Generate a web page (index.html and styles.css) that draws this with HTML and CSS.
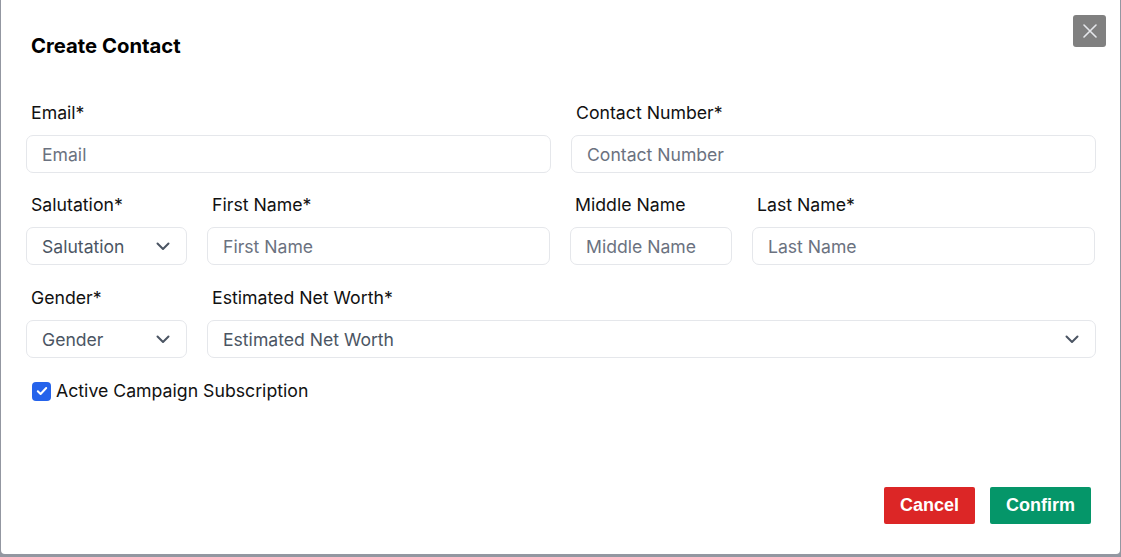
FILE: index.html
```html
<!DOCTYPE html>
<html lang="en">
<head>
<meta charset="utf-8">
<title>Create Contact</title>
<link rel="stylesheet" href="styles.css">
</head>
<body>
<div class="modal">
  <header class="modal-header">
    <h2 class="modal-title">Create Contact</h2>
    <button class="close-btn" type="button" aria-label="Close">
      <svg width="14" height="14" viewBox="0 0 14 14"><path d="M1 1L13 13M13 1L1 13" stroke="#e5e7eb" stroke-width="1.6" stroke-linecap="round"/></svg>
    </button>
  </header>
  <form class="modal-body">
    <div class="row row-2">
      <div class="field">
        <label class="label">Email*</label>
        <input class="input" placeholder="Email">
      </div>
      <div class="field">
        <label class="label">Contact Number*</label>
        <input class="input" placeholder="Contact Number">
      </div>
    </div>
    <div class="row row-4">
      <div class="field">
        <label class="label">Salutation*</label>
        <div class="select">
          <span class="select-text">Salutation</span>
          <svg class="chev" width="14" height="9" viewBox="0 0 14 9"><path d="M1.5 1.5L7 7L12.5 1.5" fill="none" stroke="#4b5563" stroke-width="2" stroke-linecap="round" stroke-linejoin="round"/></svg>
        </div>
      </div>
      <div class="field">
        <label class="label">First Name*</label>
        <input class="input" placeholder="First Name">
      </div>
      <div class="field">
        <label class="label">Middle Name</label>
        <input class="input" placeholder="Middle Name">
      </div>
      <div class="field">
        <label class="label">Last Name*</label>
        <input class="input" placeholder="Last Name">
      </div>
    </div>
    <div class="row row-gender">
      <div class="field">
        <label class="label">Gender*</label>
        <div class="select">
          <span class="select-text">Gender</span>
          <svg class="chev" width="14" height="9" viewBox="0 0 14 9"><path d="M1.5 1.5L7 7L12.5 1.5" fill="none" stroke="#4b5563" stroke-width="2" stroke-linecap="round" stroke-linejoin="round"/></svg>
        </div>
      </div>
      <div class="field">
        <label class="label">Estimated Net Worth*</label>
        <div class="select">
          <span class="select-text">Estimated Net Worth</span>
          <svg class="chev" width="14" height="9" viewBox="0 0 14 9"><path d="M1.5 1.5L7 7L12.5 1.5" fill="none" stroke="#4b5563" stroke-width="2" stroke-linecap="round" stroke-linejoin="round"/></svg>
        </div>
      </div>
    </div>
    <label class="check-row">
      <span class="checkbox">
        <svg width="12" height="10" viewBox="0 0 12 10"><path d="M1.8 5.2L4.6 8L10.2 2" fill="none" stroke="#fff" stroke-width="2" stroke-linecap="round" stroke-linejoin="round"/></svg>
      </span>
      <span class="check-label">Active Campaign Subscription</span>
    </label>
  </form>
  <footer class="modal-footer">
    <button class="btn btn-cancel" type="button">Cancel</button>
    <button class="btn btn-confirm" type="button">Confirm</button>
  </footer>
</div>
</body>
</html>
```

FILE: styles.css
```css
* { box-sizing: border-box; }
html, body { margin: 0; padding: 0; }
body {
  background: #9397a1;
  width: 1121px;
  height: 557px;
  overflow: hidden;
  font-family: Inter, "Liberation Sans", sans-serif;
}
.modal {
  position: relative;
  margin-left: 1px;
  width: 1119px;
  height: 554px;
  background: #fff;
  border-radius: 0 0 4px 4px;
  display: flex;
  flex-direction: column;
}
.modal-header {
  padding: 33px 30px 0 30px;
}
.modal-title {
  margin: 0;
  font-size: 20.3px;
  line-height: 25px;
  font-weight: 700;
  color: #000;
}
.close-btn {
  position: absolute;
  top: 15px;
  right: 14px;
  width: 33px;
  height: 32px;
  border: none;
  border-radius: 3px;
  background: #808080;
  display: flex;
  align-items: center;
  justify-content: center;
  padding: 0;
}
.modal-body {
  margin: 0;
  padding: 43px 24px 0 25px;
  display: flex;
  flex-direction: column;
  gap: 20px;
}
.row { display: grid; column-gap: 20px; }
.row-2 { grid-template-columns: 1fr 1fr; }
.row-4 { grid-template-columns: 161px 343px 162px 343px; }
.row-gender { grid-template-columns: 161px 1fr; padding-top: 1px; }
.field { display: flex; flex-direction: column; }
.label {
  font-size: 17.7px;
  line-height: 24px;
  color: #111;
  padding-left: 5px;
  margin-bottom: 10px;
}
.input, .select {
  height: 38px;
  border: 1px solid #e5e7eb;
  border-radius: 7px;
  background: #fff;
  font-family: inherit;
  font-size: 17.6px;
  padding: 0 15px;
  color: #374151;
  outline: none;
  width: 100%;
}
.input::placeholder { color: #6b7280; }
.select {
  display: flex;
  align-items: center;
  justify-content: space-between;
  padding-right: 16px;
}
.select-text { color: #4b5563; }
.chev { flex: none; }
.check-row {
  display: flex;
  align-items: center;
  gap: 5px;
  padding-left: 6px;
  margin-top: 1px;
}
.checkbox {
  width: 19px;
  height: 19px;
  border-radius: 4px;
  background: #2563eb;
  display: flex;
  align-items: center;
  justify-content: center;
}
.check-label {
  font-size: 17.7px;
  line-height: 24px;
  color: #111;
}
.modal-footer {
  margin-top: auto;
  padding: 0 29px 30px 0;
  display: flex;
  justify-content: flex-end;
  gap: 15px;
}
.btn {
  height: 37px;
  border: none;
  border-radius: 2px;
  color: #fff;
  font-family: "Liberation Sans", Arial, sans-serif;
  font-weight: 700;
  font-size: 18px;
  padding: 0;
}
.btn-cancel { width: 91px; background: #dc2626; }
.btn-confirm { width: 101px; background: #059669; }
```
